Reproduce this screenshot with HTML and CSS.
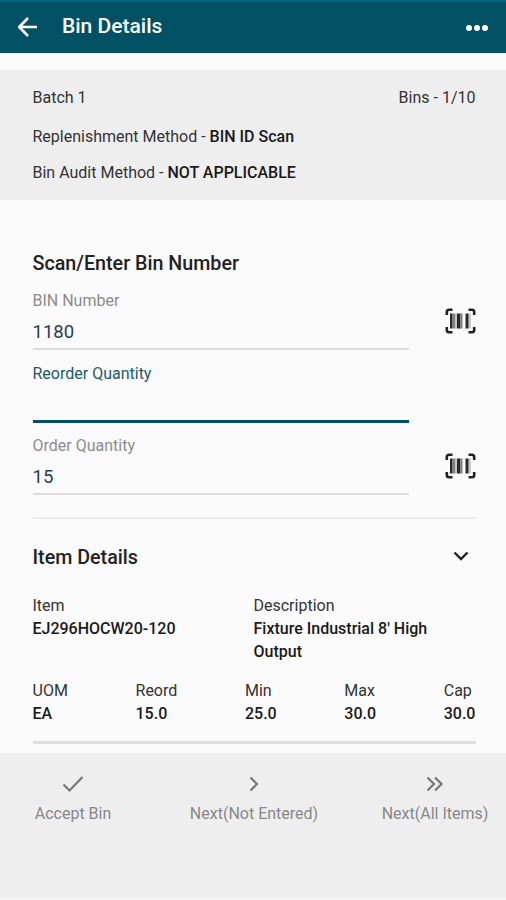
FILE: index.html
```html
<!DOCTYPE html>
<html lang="en">
<head>
  <meta charset="UTF-8">
  <meta name="viewport" content="width=device-width, initial-scale=1">
  <title>Bin Details</title>
  <link rel="stylesheet" href="styles.css">
</head>
<body>
  <header class="topbar">
    <button class="icon-btn" aria-label="Back">
      <svg width="20" height="20" viewBox="0 0 20 20"><path d="M19 10H1.5M10 1L1.2 10L10 19"/></svg>
    </button>
    <h1>Bin Details</h1>
    <button class="icon-btn more" aria-label="More">
      <svg width="22" height="6" viewBox="0 0 22 6"><circle cx="3" cy="3" r="3"/><circle cx="11" cy="3" r="3"/><circle cx="19" cy="3" r="3"/></svg>
    </button>
  </header>

  <section class="batch">
    <div class="batch-row">
      <span>Batch 1</span>
      <span class="bins">Bins - 1/10</span>
    </div>
    <p class="replenish">Replenishment Method - <b>BIN ID Scan</b></p>
    <p class="audit">Bin Audit Method - <b>NOT APPLICABLE</b></p>
  </section>

  <main>
    <form class="scan">
      <h2>Scan/Enter Bin Number</h2>

      <div class="field">
        <div class="field-main">
          <label for="bin">BIN Number</label>
          <input type="text" id="bin" value="1180">
        </div>
        <svg class="barcode" width="31" height="26" viewBox="0 0 31 26">
          <path class="frame" d="M1.8 7V4Q1.8 1.8 4 1.8H7.5M23.5 1.8H27Q29.2 1.8 29.2 4V7M29.2 19V22Q29.2 24.2 27 24.2H23.5M7.5 24.2H4Q1.8 24.2 1.8 22V19"/>
          <path class="bars" d="M5 5.5h2v15h-2zM12 5.5h3.5v15h-3.5zM20.5 5.5h2.5v15h-2.5z"/>
          <path class="bars thin" d="M7 5.5h3.5v15h-3.5zM15.5 5.5h2v15h-2zM23 5.5h1v15h-1z"/>
          <path class="bars faint" d="M10.5 5.5h1.5v15h-1.5zM24 5.5h2v15h-2z"/>
        </svg>
      </div>

      <div class="field active">
        <div class="field-main">
          <label for="reorder">Reorder Quantity</label>
          <input type="text" id="reorder">
        </div>
      </div>

      <div class="field">
        <div class="field-main">
          <label for="order">Order Quantity</label>
          <input type="text" id="order" value="15">
        </div>
        <svg class="barcode" width="31" height="26" viewBox="0 0 31 26">
          <path class="frame" d="M1.8 7V4Q1.8 1.8 4 1.8H7.5M23.5 1.8H27Q29.2 1.8 29.2 4V7M29.2 19V22Q29.2 24.2 27 24.2H23.5M7.5 24.2H4Q1.8 24.2 1.8 22V19"/>
          <path class="bars" d="M5 5.5h2v15h-2zM12 5.5h3.5v15h-3.5zM20.5 5.5h2.5v15h-2.5z"/>
          <path class="bars thin" d="M7 5.5h3.5v15h-3.5zM15.5 5.5h2v15h-2zM23 5.5h1v15h-1z"/>
          <path class="bars faint" d="M10.5 5.5h1.5v15h-1.5zM24 5.5h2v15h-2z"/>
        </svg>
      </div>
    </form>

    <section class="item">
      <div class="item-head">
        <h2>Item Details</h2>
        <svg class="chevron" width="16" height="10" viewBox="0 0 16 10"><path d="M1.5 1.5L8 8L14.5 1.5"/></svg>
      </div>

      <dl class="item-info">
        <div>
          <dt>Item</dt>
          <dd>EJ296HOCW20-120</dd>
        </div>
        <div>
          <dt>Description</dt>
          <dd>Fixture Industrial 8' High Output</dd>
        </div>
      </dl>

      <dl class="item-stats">
        <div><dt>UOM</dt><dd>EA</dd></div>
        <div><dt>Reord</dt><dd>15.0</dd></div>
        <div><dt>Min</dt><dd>25.0</dd></div>
        <div><dt>Max</dt><dd>30.0</dd></div>
        <div><dt>Cap</dt><dd>30.0</dd></div>
      </dl>
    </section>
  </main>

  <footer class="actions">
    <button>
      <svg width="22" height="18" viewBox="0 0 22 18"><path d="M1.5 9.5L7.5 15.5L20.5 2"/></svg>
      <span>Accept Bin</span>
    </button>
    <button>
      <svg width="22" height="18" viewBox="0 0 22 18"><path d="M7.5 2.5L14 9L7.5 15.5"/></svg>
      <span>Next(Not Entered)</span>
    </button>
    <button>
      <svg width="22" height="18" viewBox="0 0 22 18"><path d="M3.5 2.5L10 9L3.5 15.5M11 2.5L17.5 9L11 15.5"/></svg>
      <span>Next(All Items)</span>
    </button>
  </footer>
</body>
</html>
```
FILE: styles.css
```css
:root {
  --teal: #005163;
  --teal-light: #00677c;
  --panel: #eeeeee;
  --page: #fafafa;
  --text: #333;
  --muted: #8c8c8c;
  --line: #dcdcdc;
}

* {
  box-sizing: border-box;
}

body {
  margin: 0;
  height: 900px;
  display: flex;
  flex-direction: column;
  font-family: Roboto, sans-serif;
  font-size: 16px;
  line-height: 23px;
  color: var(--text);
  background: var(--page);
}

h1, h2, p, dl, dd {
  margin: 0;
}

button {
  padding: 0;
  border: none;
  background: none;
  font: inherit;
  color: inherit;
}

svg {
  display: block;
  fill: none;
  stroke: currentColor;
}

/* Header */
.topbar {
  display: flex;
  align-items: center;
  height: 53px;
  padding: 0 18px 2px;
  border-top: 2px solid var(--teal-light);
  background: var(--teal);
  color: #fff;
}

.topbar h1 {
  margin-left: 24px;
  font-size: 21px;
  font-weight: 500;
}

.icon-btn svg {
  stroke-width: 2.6;
}

.more {
  margin-left: auto;
  padding-top: 2px;
}

.more svg {
  fill: #fff;
  stroke: none;
}

/* Batch summary */
.batch {
  height: 130px;
  margin-top: 17px;
  padding: 16px 30.5px 0 32.5px;
  background: var(--panel);
}

.batch-row {
  display: flex;
  justify-content: space-between;
}

.batch p {
  margin-top: 16px;
}

.batch .audit {
  margin-top: 13px;
}

b, dd {
  font-weight: 500;
  color: #1a1a1a;
}

/* Scan form */
main {
  padding: 0 30.5px 0 32.5px;
}

h2 {
  font-size: 19.7px;
  font-weight: 500;
  color: #222;
}

.scan {
  padding-top: 52px;
  height: 319px;
  border-bottom: 2px solid #ececec;
}

.field {
  display: flex;
  justify-content: space-between;
  height: 72.5px;
}

.scan h2 + .field {
  margin-top: 14px;
}

.field-main {
  width: 376px;
}

.field label {
  display: block;
  color: var(--muted);
}

.field input {
  display: block;
  width: 100%;
  height: 38px;
  padding: 3px 0 0;
  border: none;
  border-bottom: 2px solid var(--line);
  border-radius: 0;
  background: none;
  font: inherit;
  font-size: 18.5px;
  color: #263f4d;
}

.field.active label {
  color: #215a6c;
}

.field.active input {
  border-bottom: 3px solid var(--teal);
}

.barcode {
  margin-top: 19px;
  color: #222;
}

.barcode .frame {
  stroke-width: 2.6;
}

.barcode .bars {
  fill: #2a2a2a;
  stroke: none;
}

.barcode .thin {
  fill: #808080;
}

.barcode .faint {
  fill: #c8c8c8;
}

/* Item details */
.item {
  height: 225px;
  border-bottom: 3px solid #dedede;
}

.item-head {
  display: flex;
  justify-content: space-between;
  align-items: center;
  padding: 27px 7px 0 0;
}

.chevron {
  margin-bottom: 3px;
  stroke: #222;
  stroke-width: 2.4;
}

.item-info {
  display: grid;
  grid-template-columns: 221px 190px;
  margin-top: 25px;
}

.item-stats {
  display: flex;
  justify-content: space-between;
  margin-top: 16px;
}

/* Footer actions */
.actions {
  display: grid;
  grid-template-columns: 76px 1fr 106px;
  justify-items: center;
  align-items: start;
  height: 147px;
  margin-top: auto;
  padding: 22px 18px 0 35px;
  border-bottom: 2px solid #f6f6f6;
  background: var(--panel);
  color: #888;
}

.actions button {
  display: flex;
  flex-direction: column;
  align-items: center;
  gap: 9px;
  white-space: nowrap;
}

.actions button:nth-child(2) {
  margin-left: 15px;
}

.actions svg {
  stroke: #777;
  stroke-width: 2.2;
}
```
